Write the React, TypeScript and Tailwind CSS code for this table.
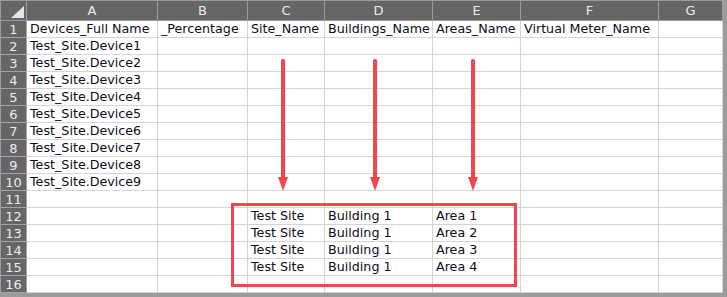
import React from "react";

const cols = ["A", "B", "C", "D", "E", "F", "G"];
const widths = [131, 90, 77, 108, 88, 138, 64];

const data: Record<number, string[]> = {
  1: ["Devices_Full Name", "_Percentage", "Site_Name", "Buildings_Name", "Areas_Name", "Virtual Meter_Name", ""],
  2: ["Test_Site.Device1"],
  3: ["Test_Site.Device2"],
  4: ["Test_Site.Device3"],
  5: ["Test_Site.Device4"],
  6: ["Test_Site.Device5"],
  7: ["Test_Site.Device6"],
  8: ["Test_Site.Device7"],
  9: ["Test_Site.Device8"],
  10: ["Test_Site.Device9"],
  12: ["", "", "Test Site", "Building 1", "Area 1"],
  13: ["", "", "Test Site", "Building 1", "Area 2"],
  14: ["", "", "Test Site", "Building 1", "Area 3"],
  15: ["", "", "Test Site", "Building 1", "Area 4"],
};

const rows = Array.from({ length: 16 }, (_, i) => i + 1);

// red annotation arrow pointing down
const Arrow = ({ left }: { left: number }) => (
  <svg
    className="absolute top-[57px]"
    style={{ left: left - 6 }}
    width="12"
    height="134"
    viewBox="0 0 12 134"
  >
    <rect x="4" y="1" width="4" height="120" rx="1.5" fill="#f2464b" />
    <polygon points="1,119 11,119 6,133" fill="#f2464b" />
  </svg>
);

export default function App() {
  return (
    <div
      className="relative w-[727px] h-[297px] bg-white overflow-hidden border-t border-l border-r-4 border-b-4 border-[#9b9b9b] text-[12.7px] text-[#0d0d1a]"
      style={{ fontFamily: '"DejaVu Sans", Tahoma, sans-serif' }}
    >
      <div className="grid grid-cols-[26px_131px_90px_77px_108px_88px_138px_64px] grid-rows-[20px_repeat(16,17px)]">
        {/* header row */}
        <div className="relative bg-[#666666] border-r border-b border-[#9b9b9b]">
          <svg className="absolute right-[2px] bottom-[2px]" width="13" height="12" viewBox="0 0 13 12">
            <polygon points="13,0 13,12 0,12" fill="#e6e6e6" />
          </svg>
        </div>
        {cols.map((c) => (
          <div
            key={c}
            className="flex items-center justify-center bg-[#666666] border-r border-b border-[#9b9b9b] text-[#ececec] text-[13px]"
          >
            {c}
          </div>
        ))}

        {rows.map((r) => (
          <React.Fragment key={r}>
            <div className="flex items-center justify-center bg-[#666666] border-r border-b border-[#a3a3a3] text-[#ececec] text-[13px] pt-[1px]">
              {r}
            </div>
            {widths.map((_, ci) => (
              <div
                key={ci}
                className="flex items-center pl-[3px] pt-[1px] whitespace-nowrap overflow-visible border-r border-b border-[#d4d4d4] leading-none"
              >
                {data[r]?.[ci] ?? ""}
              </div>
            ))}
          </React.Fragment>
        ))}
      </div>

      {/* annotations */}
      <Arrow left={282} />
      <Arrow left={374} />
      <Arrow left={472} />
      <div className="absolute left-[230px] top-[202px] w-[286px] h-[84px] border-[3px] border-[#f2464b]" />
    </div>
  );
}
